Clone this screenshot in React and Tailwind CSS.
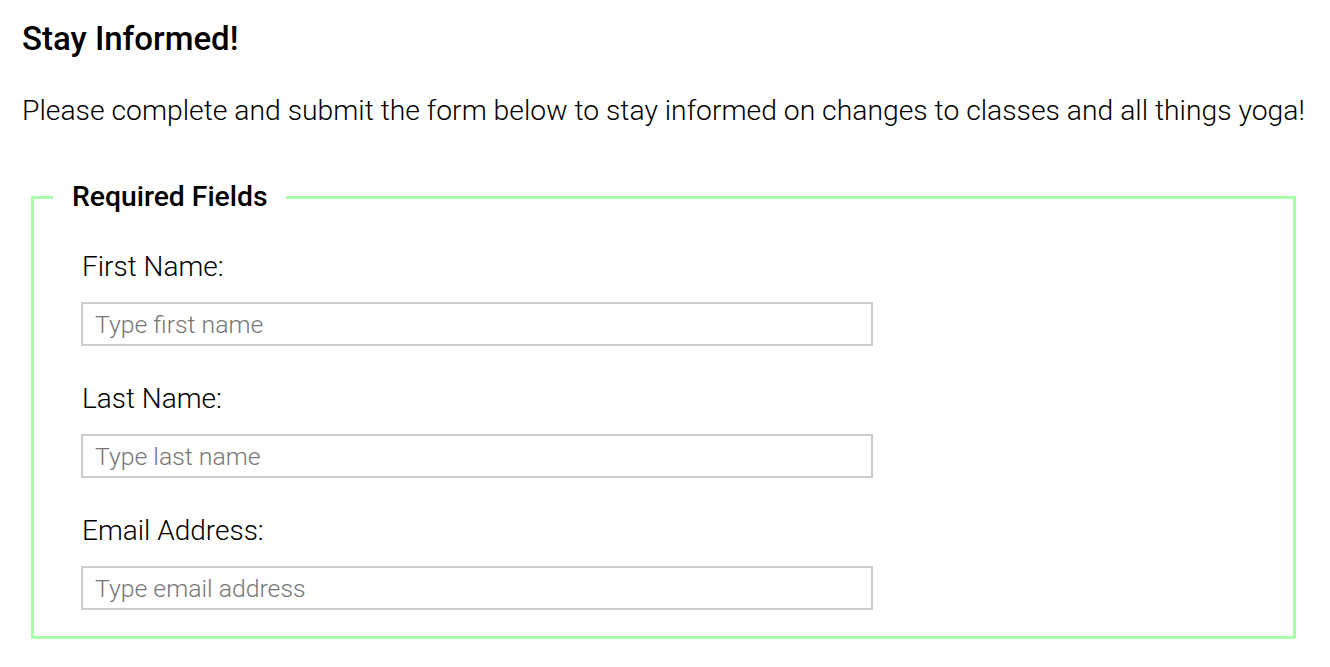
import React, { useState } from 'react';

const fields = [
  { id: 'firstName', label: 'First Name:', placeholder: 'Type first name', type: 'text' },
  { id: 'lastName', label: 'Last Name:', placeholder: 'Type last name', type: 'text' },
  { id: 'email', label: 'Email Address:', placeholder: 'Type email address', type: 'email' },
];

const App = () => {
  const [values, setValues] = useState({ firstName: '', lastName: '', email: '' });

  const handleChange = (id, event) => {
    setValues({ ...values, [id]: event.target.value });
  };

  return (
    <div className="min-h-screen bg-white px-[22px] pt-[20px] text-black font-['Roboto',sans-serif]">
      <h2 className="text-[33px] font-medium leading-[38px]">Stay Informed!</h2>
      <p className="mt-[36px] text-[28.3px] font-light leading-[34px]">
        Please complete and submit the form below to stay informed on changes to classes and all things yoga!
      </p>
      <form className="mt-[52px]">
        <fieldset className="ml-[9px] mr-[12px] border-[3px] border-[#aaffaa] px-[19px] pb-[26px]">
          <legend className="px-[19px] text-[28.3px] font-medium leading-[34px]">Required Fields</legend>
          <div className="pl-[28px] pt-[36px] flex flex-col gap-[36px]">
            {fields.map((field) => (
              <div key={field.id} className="flex flex-col">
                <label htmlFor={field.id} className="text-[28px] font-light leading-[34px] pl-[1px]">
                  {field.label}
                </label>
                <input
                  id={field.id}
                  type={field.type}
                  value={values[field.id]}
                  onChange={(e) => handleChange(field.id, e)}
                  placeholder={field.placeholder}
                  className="mt-[18px] w-[792px] h-[44px] border-2 border-[#cccccc] px-[12px] text-[24.8px] font-light placeholder:text-[#777777] outline-none"
                />
              </div>
            ))}
          </div>
        </fieldset>
      </form>
    </div>
  );
};

export default App;
